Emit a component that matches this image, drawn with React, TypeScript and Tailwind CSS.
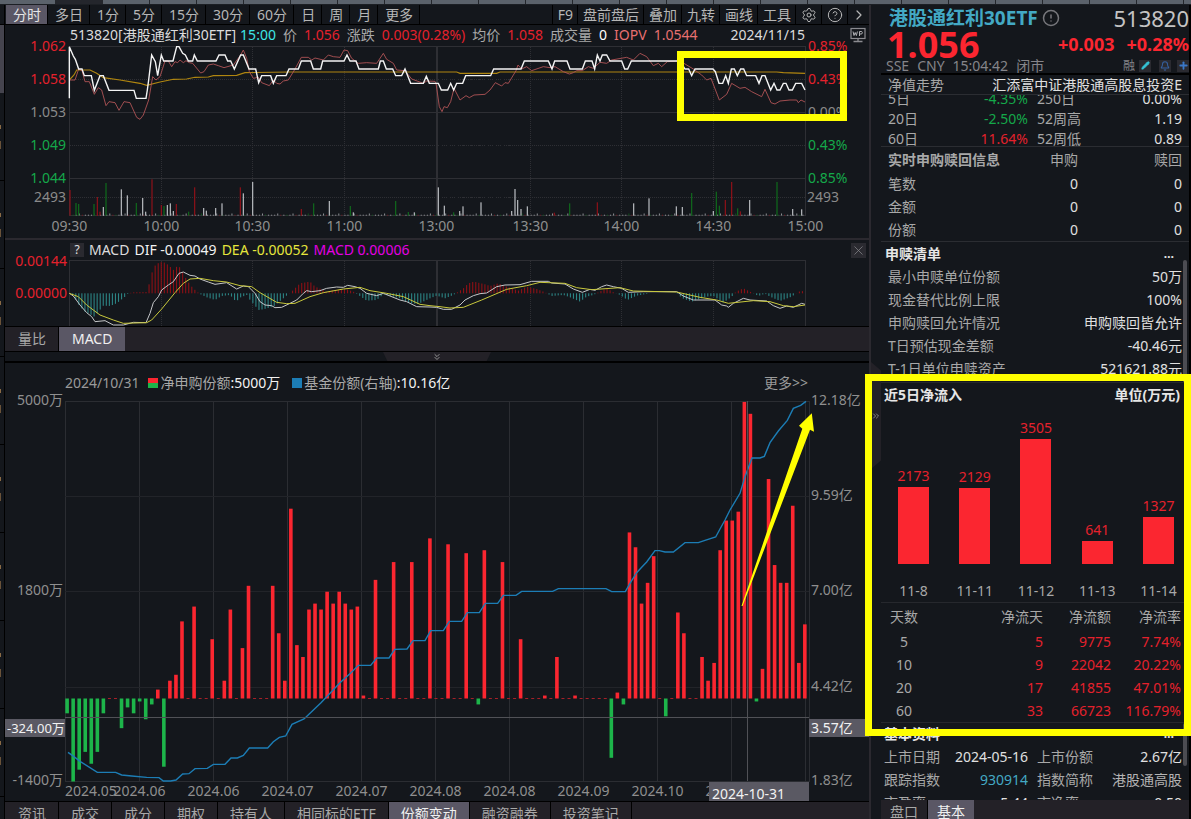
import React from "react";
import { Bell, ChevronRight, ChevronsDown, ChevronsRight, CircleAlert, CircleHelp, Pencil, Plus, Settings, X } from "lucide-react";

type Pt = [number, number];

/* Series are stored at three units per pixel. */
const line = (data: number[], dy = 0) => {
  const out: string[] = [];
  for (let i = 0; i < data.length; i += 2) out.push(`${data[i] / 3},${data[i + 1] / 3 + dy}`);
  return out.join(" ");
};
const shift = (data: number[], dx: number) => data.map((v, i) => (i % 2 ? v : v + dx));

const price = [
  208, 295, 208, 140, 220, 168, 226, 178, 236, 207, 246, 207, 253, 227, 274, 227, 283, 271, 300, 227, 310, 227, 327, 271, 402, 271, 409, 295,
  438, 295, 442, 270, 446, 240, 455, 165, 466, 185, 473, 227, 484, 165, 491, 183, 519, 183, 530, 140, 537, 140, 548, 160, 556, 165, 565, 183,
  578, 183, 583, 165, 592, 183, 648, 183, 657, 165, 675, 165, 683, 183, 692, 183, 703, 207, 722, 165, 730, 165, 747, 207, 767, 207, 776, 248,
  785, 227, 812, 227, 820, 250, 830, 227, 858, 227, 867, 207, 895, 207, 904, 183, 932, 183, 940, 207, 962, 207, 968, 183, 1032, 183, 1041, 165,
  1050, 183, 1068, 183, 1077, 207, 1135, 207, 1141, 183, 1150, 183, 1159, 207, 1178, 207, 1187, 227, 1205, 227, 1215, 207, 1232, 250,
  1270, 250, 1279, 229, 1288, 250,
  ...shift([
    25, 250, 34, 270, 53, 270, 62, 250, 71, 270, 80, 250, 98, 250, 107, 227, 182, 227, 191, 207, 273, 207, 283, 183, 355, 183, 366, 207,
    374, 183, 411, 183, 420, 207, 457, 207, 466, 183, 486, 183, 494, 207, 502, 165, 510, 183, 517, 165, 530, 165, 540, 183, 575, 183,
    584, 207, 593, 207, 604, 183, 750, 183, 765, 207, 776, 207, 785, 227, 795, 207, 849, 207, 856, 215, 867, 250, 878, 250, 887, 227,
    895, 250, 904, 207, 913, 207, 922, 227, 932, 207, 941, 207, 950, 227, 977, 227, 987, 250, 996, 227, 1005, 227, 1022, 270, 1032, 250,
    1041, 270, 1050, 270, 1060, 250, 1068, 250, 1077, 270, 1087, 270, 1097, 250, 1115, 250, 1125, 270,
  ], 1290),
];

const iopv = [
  208, 240, 225, 240, 236, 207, 246, 212, 255, 245, 268, 245, 283, 283, 295, 263, 305, 270, 318, 317, 327, 305, 345, 308, 357, 331, 372, 305,
  390, 308, 410, 352, 420, 358, 430, 345, 446, 300, 458, 230, 468, 240, 480, 230, 495, 183, 505, 183, 515, 200, 525, 185, 533, 188, 540, 180,
  550, 188, 558, 182, 568, 188, 578, 190, 602, 219, 612, 215, 625, 195, 640, 192, 655, 197, 672, 203, 700, 195, 722, 165, 730, 150, 740, 175,
  748, 215, 760, 235, 775, 232, 785, 248, 808, 257, 820, 240, 830, 250, 840, 252, 850, 243, 865, 240, 885, 207, 904, 172, 925, 172, 935, 180,
  945, 174, 970, 180, 985, 165, 1000, 170, 1020, 172, 1032, 150, 1043, 152, 1055, 175, 1075, 190, 1100, 188, 1130, 190, 1150, 160, 1160, 178,
  1180, 190, 1190, 210, 1215, 212, 1235, 237, 1270, 250, 1280, 243, 1305, 244,
  ...shift([
    18, 250, 28, 320, 36, 335, 42, 320, 52, 323, 62, 305, 72, 265, 90, 300, 108, 287, 118, 293, 132, 285, 165, 283, 180, 270, 196, 248,
    215, 258, 225, 248, 235, 250, 258, 212, 264, 195, 275, 207, 290, 200, 305, 212, 340, 200, 360, 203, 375, 200, 400, 215, 418, 222,
    430, 218, 440, 212, 457, 212, 475, 200, 490, 205, 510, 187, 530, 190, 545, 180, 590, 172, 610, 180, 630, 160, 650, 170, 670, 197,
    685, 190, 695, 200, 712, 185, 750, 183, 790, 207, 815, 225, 830, 240, 843, 235, 868, 300, 890, 283, 905, 250, 930, 265, 945, 262,
    965, 275, 995, 290, 1005, 268, 1023, 308, 1035, 312, 1050, 303, 1080, 300, 1100, 300, 1105, 308, 1113, 300, 1125, 306,
  ], 1290),
];

const average = [
  208, 240, 222, 225, 230, 210, 270, 210, 290, 220, 310, 233, 360, 240, 420, 250, 440, 256, 480, 246, 520, 238, 560, 237, 585, 232, 625, 231,
  640, 227, 710, 226, 735, 218, 870, 216, 1370, 216, 1380, 220, 1490, 220, 1500, 216, 2330, 216, 2350, 218, 2415, 220,
];

type Tone = "r" | "g" | "w";
const toneFill: Record<Tone, string> = { r: "#8f1219", g: "#0f6a1c", w: "#b9bcc0" };
const volume: [number, number, Tone][] = [
  [210, 210, "r"], [228, 249, "g"], [236, 252, "g"], [282, 252, "g"], [292, 231, "r"], [300, 275, "r"], [310, 261, "w"], [318, 189, "g"],
  [364, 208, "w"], [382, 226, "w"], [409, 249, "g"], [428, 234, "w"], [437, 275, "w"], [456, 178, "r"], [484, 255, "r"], [492, 258, "g"],
  [502, 255, "w"], [511, 250, "w"], [520, 273, "w"], [529, 252, "r"], [566, 275, "g"], [584, 202, "r"], [611, 264, "w"], [619, 272, "w"],
  [647, 264, "w"], [666, 250, "w"], [721, 202, "r"], [730, 220, "w"], [758, 186, "w"], [904, 267, "r"], [941, 250, "g"], [988, 243, "w"],
  [1051, 258, "g"], [1060, 277, "w"], [1187, 243, "g"], [1225, 276, "g"], [1243, 277, "w"], [1315, 202, "w"], [1333, 257, "w"],
  [1361, 277, "g"], [1379, 273, "w"], [1389, 259, "w"], [1443, 247, "w"], [1535, 273, "w"], [1545, 207, "w"], [1553, 240, "w"],
  [1563, 267, "w"], [1582, 259, "w"], [1663, 278, "r"], [1709, 250, "g"], [1792, 247, "r"], [1901, 250, "w"], [1947, 235, "w"],
  [2029, 259, "w"], [2047, 261, "w"], [2075, 219, "g"], [2140, 273, "w"], [2149, 215, "g"], [2158, 257, "g"], [2176, 240, "r"],
  [2195, 186, "r"], [2213, 265, "g"], [2221, 274, "r"], [2249, 240, "w"], [2331, 186, "g"], [2378, 267, "w"], [2405, 268, "w"],
];

const histogram: Pt[] = ([
  [210, 520], [218, 525], [240, 560], [255, 575], [283, 590], [310, 557], [330, 558], [350, 550], [375, 530], [385, 520], [400, 517], [440, 516],
  [446, 497], [458, 450], [468, 432], [488, 425], [505, 435], [520, 450], [530, 440], [540, 442], [550, 460], [560, 480], [575, 500],
  [590, 515], [600, 522], [620, 532], [645, 540], [665, 528], [690, 525], [708, 545], [722, 532], [740, 525], [750, 540], [776, 570],
  [790, 568], [820, 560], [850, 535], [870, 518], [880, 510], [900, 490], [930, 485], [945, 500], [965, 508], [980, 516], [1000, 510],
  [1040, 508], [1060, 515], [1075, 525], [1100, 542], [1130, 540], [1150, 523], [1170, 528], [1200, 535], [1230, 550], [1255, 552],
  [1290, 535], [1310, 527], [1335, 535], [1360, 525], [1375, 515], [1390, 505], [1405, 490], [1422, 485], [1455, 493], [1470, 498],
  [1495, 490], [1520, 500], [1555, 512], [1580, 500], [1610, 507], [1635, 517], [1655, 528], [1690, 525], [1710, 532], [1740, 545],
  [1760, 530], [1780, 525], [1795, 517], [1820, 505], [1840, 517], [1860, 525], [1882, 540], [1910, 527], [1940, 522], [1950, 520],
  [2030, 520], [2047, 535], [2075, 545], [2120, 530], [2140, 528], [2170, 548], [2195, 530], [2208, 515], [2230, 505], [2250, 515],
  [2275, 528], [2295, 521], [2310, 530], [2340, 543], [2375, 530], [2395, 515], [2412, 513],
] as Pt[]);

const sample = (env: Pt[], x: number) => {
  for (let i = 1; i < env.length; i++) {
    if (x <= env[i][0]) {
      const [x0, y0] = env[i - 1];
      const [x1, y1] = env[i];
      return y0 + ((y1 - y0) * (x - x0)) / (x1 - x0);
    }
  }
  return env[env.length - 1][1];
};
const minutes = Array.from({ length: 240 }, (_, i) => 218 + i * 9.16);

const dif = [
  208, 520, 220, 528, 240, 555, 260, 578, 275, 590, 285, 605, 315, 602, 340, 615, 370, 615, 400, 607, 438, 608, 450, 580, 460, 548, 475, 530,
  485, 510, 505, 495, 520, 485, 537, 460, 550, 456, 570, 466, 585, 468, 600, 477, 625, 486, 645, 493, 680, 488, 710, 507, 730, 498, 745, 500,
  765, 520, 780, 545, 795, 555, 815, 557, 825, 563, 845, 562, 870, 550, 890, 540, 910, 520, 920, 512, 935, 515, 960, 512, 980, 505, 1010, 501,
  1030, 502, 1043, 496, 1065, 500, 1080, 505, 1100, 520, 1130, 527, 1150, 520, 1170, 528, 1200, 540, 1220, 545, 1250, 560, 1290, 561,
  ...shift([
    20, 562, 40, 568, 65, 568, 90, 555, 105, 540, 130, 527, 150, 521, 170, 519, 200, 500, 225, 495, 270, 494, 305, 484, 355, 484, 365, 489,
    405, 492, 430, 507, 457, 517, 480, 508, 495, 511, 515, 500, 530, 495, 550, 500, 575, 505, 595, 517, 640, 515, 740, 515, 760, 528,
    790, 540, 855, 540, 875, 555, 890, 558, 895, 562, 910, 550, 940, 535, 960, 540, 1010, 543, 1030, 557, 1050, 565, 1070, 558, 1090, 562,
    1115, 550, 1125, 553,
  ], 1290),
];
const dea = [
  208, 520, 235, 530, 260, 555, 300, 585, 340, 600, 370, 610, 440, 608, 455, 600, 485, 567, 525, 518, 550, 490, 570, 477, 600, 475, 640, 482,
  680, 486, 720, 497, 755, 500, 780, 518, 830, 547, 860, 551, 885, 550, 930, 530, 970, 518, 1030, 507, 1080, 502, 1110, 512, 1160, 520,
  1210, 530, 1260, 553, 1290, 557,
  ...shift([
    30, 560, 60, 564, 100, 562, 155, 540, 230, 508, 290, 497, 330, 487, 405, 490, 440, 503, 485, 509, 570, 503, 610, 513, 740, 516,
    810, 532, 860, 540, 895, 550, 970, 542, 1020, 545, 1060, 557, 1090, 560, 1125, 555,
  ], 1290),
];

/* Daily net subscriptions in units of 10,000 shares; days not listed are zero. */
const subscriptions: Record<number, number> = {
  0: -250, 1: -1400, 2: -1200, 3: -900, 4: -1100, 5: -900, 6: -250, 9: -500, 10: -150, 11: -250, 12: -50, 13: -350, 14: -100, 15: 150,
  16: -1150, 17: 300, 18: 400, 19: 1300, 21: 1550, 24: 1000, 26: 300, 27: 1500, 29: 850, 30: 1900, 34: 1900, 35: 1100, 36: 300, 37: 3200,
  38: 900, 39: 700, 40: 1500, 41: 1600, 42: 1500, 43: 1800, 44: 1600, 45: 1800, 46: 1600, 47: 1500, 48: 1550, 49: 50, 51: 2000, 54: 2300,
  57: 2300, 60: 2700, 63: 2600, 66: 2450, 68: -100, 69: 2500, 72: 2300, 75: 1000, 79: 50, 81: 700, 84: 50, 90: -1000, 91: 100, 92: -100,
  93: 2800, 94: 2550, 95: 1600, 96: 1950, 97: 2400, 99: -300, 101: 1450, 102: 1100, 105: 700, 106: 300, 107: 600, 108: 2500, 109: 3000,
  110: 3000, 111: 3150, 112: 5000, 113: 4800, 114: -50, 115: 500, 116: 3700, 117: 2250, 118: 1950, 119: 1950, 120: 3250, 121: 600, 122: 1250,
};
const shares = [
  204, 487, 222, 500, 240, 514, 292, 547, 347, 547, 365, 555, 395, 558, 440, 562, 477, 563, 490, 573, 512, 573, 528, 570, 548, 552, 567, 551,
  585, 536, 622, 535, 640, 523, 675, 523, 693, 504, 712, 504, 730, 496, 748, 474, 803, 474, 820, 455, 838, 442, 857, 438, 876, 403, 912, 387,
  930, 370, 963, 338, 1020, 278, 1053, 248, 1075, 226, 1112, 226, 1130, 204, 1167, 204, 1184, 178, 1221, 177, 1239, 152, 1275, 152, 1292, 122,
  ...shift([
    40, 122, 58, 94, 95, 94, 112, 68, 148, 68, 166, 40, 203, 40, 220, 16, 258, 16, 275, 4, 368, 4, 385, -4, 528, -4, 545, 5, 586, 5,
    600, -20, 620, -52, 635, -68, 650, -84, 675, -118, 688, -118, 705, -114, 730, -114, 765, -142, 805, -142, 825, -149, 857, -159,
    870, -183, 885, -210, 900, -240, 930, -290, 945, -340, 966, -396, 990, -396, 1003, -401, 1020, -442, 1045, -477, 1072, -509,
    1090, -545, 1112, -554, 1128, -566,
  ], 1290),
];

const chartFont = "text-[14px]";
const hours = ["09:30", "10:00", "10:30", "11:00", "13:00", "13:30", "14:00", "14:30", "15:00"];
const hourX = [69.5, 161.5, 252.5, 344.5, 436.5, 530.5, 621.5, 713.5, 805.5];

function PriceChart() {
  const left: [string, number, string][] = [
    ["1.062", 46, "#e4212c"], ["1.058", 79, "#e4212c"], ["1.053", 112, "#8a8a8a"], ["1.049", 145, "#14a84a"], ["1.044", 178, "#14a84a"], ["2493", 197, "#8a8a8a"],
  ];
  const right: [string, number, string][] = [
    ["0.85%", 46, "#e4212c"], ["0.43%", 79, "#e4212c"], ["0.00%", 112, "#8a8a8a"], ["0.43%", 145, "#14a84a"], ["0.85%", 178, "#14a84a"], ["2493", 197, "#8a8a8a"],
  ];
  return (
    <svg viewBox="5 45 864 192" className={`block h-auto w-full overflow-visible ${chartFont}`} role="img" aria-label="分时走势">
      <g stroke="#2e2f34" strokeWidth="1" shapeRendering="crispEdges">
        <path d="M69.5 46.5H805.5V215.5H69.5ZM69.5 112.5H805.5M69.5 178.5H805.5" fill="none" />
        <path d="M69.5 79.5H805.5M69.5 145.5H805.5M69.5 197.5H805.5" strokeDasharray="1 1" />
        {hourX.slice(1, 8).map((x) => (
          <path key={x} d={`M${x} 46.5V215.5`} strokeDasharray={x === 436.5 ? undefined : "1 1"} strokeWidth={x === 436.5 ? 2 : 1} />
        ))}
      </g>
      {minutes.map((x, i) => (
        <rect key={x} x={x / 3} y={i % 5 === 2 ? 213.5 : 214.7} width="1" height={i % 5 === 2 ? 2 : 1} fill={toneFill[i % 7 === 0 ? "g" : i % 5 === 3 ? "r" : "w"]} opacity="0.75" />
      ))}
      {volume.map(([x, top, tone]) => (
        <rect key={x} x={x / 3 - 0.6} y={120 + top / 3} width="1.2" height={(287 - top) / 3} fill={toneFill[tone]} />
      ))}
      <polyline points={line(average)} fill="none" stroke="#b08610" strokeWidth="1.1" />
      <polyline points={line(iopv)} fill="none" stroke="#b05456" strokeWidth="0.9" />
      <polyline points={line(price)} fill="none" stroke="#f4f4f4" strokeWidth="1.4" />
      {left.map(([t, y, c]) => (
        <text key={y} x="66" y={y + 5} textAnchor="end" fill={c}>{t}</text>
      ))}
      {right.map(([t, y, c]) => (
        <text key={y} x={t === "2493" ? 807 : 808} y={y + 5} fill={c}>{t}</text>
      ))}
      {hours.map((t, i) => (
        <text key={t} x={hourX[i]} y="231" textAnchor="middle" fill="#8f8f8f">{t}</text>
      ))}
      <rect x="680.5" y="54.5" width="163" height="63" fill="none" stroke="#ffff00" strokeWidth="7" />
    </svg>
  );
}

function MacdChart() {
  return (
    <svg viewBox="5 260 864 66" className={`block h-auto w-full overflow-visible ${chartFont}`} role="img" aria-label="MACD">
      <g stroke="#2e2f34" strokeWidth="1" fill="none" shapeRendering="crispEdges">
        <path d="M69.5 326V260.5H805.5V326" />
        {hourX.slice(1, 8).map((x) => (
          <path key={x} d={`M${x} 260.5V326`} strokeDasharray={x === 436.5 ? undefined : "1 1"} strokeWidth={x === 436.5 ? 2 : 1} />
        ))}
      </g>
      {minutes.map((x) => {
        const d = (sample(histogram, x) - 520) / 3;
        return <rect key={x} x={x / 3 - 0.5} y={293.3 + Math.min(0, d)} width="1.1" height={Math.abs(d)} fill={d < 0 ? "#8c1015" : "#2c8484"} />;
      })}
      <polyline points={line(dif, 120)} fill="none" stroke="#c4c6c8" strokeWidth="1" />
      <polyline points={line(dea, 120)} fill="none" stroke="#c8c83c" strokeWidth="1" />
      <text x="67" y="266" textAnchor="end" fill="#e4212c">0.00144</text>
      <text x="67" y="298" textAnchor="end" fill="#e4212c">0.00000</text>
    </svg>
  );
}

function ShareChart() {
  const gridX = [139.5, 213.5, 287.5, 361.5, 435.5, 509.5, 583.5, 657.5, 731.5];
  const months = ["2024.06", "2024.06", "2024.07", "2024.07", "2024.08", "2024.08", "2024.09", "2024.10", "2024.10"];
  const left: [string, number][] = [["5000万", 400], ["1800万", 590], ["-1400万", 780]];
  const right: [string, number][] = [["12.18亿", 400], ["9.59亿", 495], ["7.00亿", 590], ["4.42亿", 686], ["1.83亿", 780]];
  return (
    <svg viewBox="5 393 864 408" className={`block h-auto w-full overflow-visible ${chartFont}`} role="img" aria-label="份额变动">
      <g stroke="#2b2d32" strokeWidth="1" fill="none" shapeRendering="crispEdges">
        <path d="M65.5 401.5H809.5V781.5H65.5ZM805.5 401V781" />
        {gridX.map((x) => <path key={x} d={`M${x} 401V781`} />)}
        <path d="M65 496.5H809M65 591.5H809M65 687.5H809" stroke="#222429" />
      </g>
      {Array.from({ length: 123 }, (_, i) => {
        const v = subscriptions[i] ?? 0;
        const x = 67.1 + i * 6.047;
        const h = Math.abs(v) / 16.86;
        if (!v) return <rect key={i} x={x - 1.5} y="698" width="3" height="1" fill="#a52028" />;
        return <rect key={i} x={x - 1.8} y={v > 0 ? 698.5 - h : 698.5} width="3.6" height={h} fill={v > 0 ? "#fb2630" : "#1db54a"} />;
      })}
      <polyline points={line(shares, 590)} fill="none" stroke="#1c7db5" strokeWidth="1.4" />
      <g stroke="#505156" strokeWidth="1" shapeRendering="crispEdges">
        <path d="M65 717.5H809" />
        <path d="M747.5 401V781" />
      </g>
      {left.map(([t, y]) => <text key={t} x="63" y={y + 5} textAnchor="end" fill="#8f8f8f">{t}</text>)}
      {right.map(([t, y]) => <text key={t} x="811" y={y + 5} fill="#8f8f8f">{t}</text>)}
      <text x="65" y="796" fill="#8f8f8f">2024.05</text>
      {months.map((t, i) => <text key={i} x={gridX[i]} y="796" textAnchor="middle" fill="#8f8f8f">{t}</text>)}
      <rect x="5" y="719" width="60" height="18" fill="#5a5963" />
      <text x="7" y="733" fill="#f2f2f2" className="text-[13px]">-324.00万</text>
      <rect x="809" y="719" width="60" height="18" fill="#5a5963" />
      <text x="811" y="733" fill="#f2f2f2">3.57亿</text>
      <rect x="709" y="782" width="100" height="19" fill="#5a5963" />
      <text x="712" y="799" fill="#f2f2f2">2024-10-31</text>
      <path d="M741.5 606 802.3 428.7 799 425.7 811.8 413.3 814 431.7 810 429.7 742.6 606Z" fill="#ffff00" />
    </svg>
  );
}

function TopStrip() {
  return (
    <div className="flex h-[5px] shrink-0 overflow-hidden border-b border-[#1c1f24] bg-[#5b626b]">
      <div className="w-[55px] shrink-0" />
      {Array.from({ length: 40 }, (_, i) => (
        <div key={i} className={`w-[47px] shrink-0 border-l border-[#24272c] ${i === 0 ? "bg-[#24262c]" : ""}`} />
      ))}
    </div>
  );
}

const periods = ["分时", "多日", "1分", "5分", "15分", "30分", "60分", "日", "周", "月", "更多"];
const tools = ["F9", "盘前盘后", "叠加", "九转", "画线", "工具"];
const toolClass = "flex items-center border-l border-black pr-1 pl-[5px]";

function Toolbar() {
  return (
    <div className="flex h-5 shrink-0 border-b border-black pl-px leading-5 text-[#b6b6b6]">
      {periods.map((p, i) => (
        <button key={p} type="button" className={`border-r border-black pr-[6px] pl-[7px] ${i === 0 ? "bg-[#5a5765] text-[#e6e6e6]" : ""}`}>{p}</button>
      ))}
      <div className="ml-auto flex">
        {tools.map((t) => <button key={t} type="button" className={toolClass}>{t}</button>)}
        <button type="button" aria-label="设置" className={toolClass}><Settings size={16} strokeWidth={1.5} /></button>
        <button type="button" aria-label="帮助" className={toolClass}><CircleHelp size={16} strokeWidth={1.5} /></button>
        <button type="button" aria-label="展开" className="flex w-[22px] items-center justify-center border-l border-black"><ChevronRight size={16} strokeWidth={1.8} /></button>
      </div>
    </div>
  );
}

function QuoteLine() {
  return (
    <div className="flex h-5 shrink-0 items-center gap-[7px] pr-[3px] pl-[65px] leading-5 whitespace-nowrap">
      <span className="text-[#dcdcdc]">513820[港股通红利30ETF]</span>
      <span className="-ml-[3px] text-[#3fe6e6]">15:00</span>
      <span>价</span><span className="text-[#e4212c]">1.056</span>
      <span>涨跌</span><span className="text-[#e4212c]">0.003(0.28%)</span>
      <span>均价</span><span className="text-[#e4212c]">1.058</span>
      <span>成交量</span><span className="text-white">0</span>
      <span className="text-[#e87070]">IOPV</span><span className="text-[#e87070]">1.0544</span>
      <span className="ml-auto text-[#dcdcdc]">2024/11/15</span>
      <svg className="ml-[38px] shrink-0" width="16" height="16" viewBox="0 0 16 16" aria-hidden="true">
        <rect x="1" y="1.5" width="14" height="10" fill="none" stroke="#8b8b90" strokeWidth="1.2" />
        <path d="M8 12v2M3.500 14.500h9" stroke="#8b8b90" strokeWidth="1.3" />
        <path d="M3 4.500l1 4 1.200-3 1.200 3 1-4M9.500 9V4.500h2.200q1.300 1.200 0 2.500H9.500" fill="none" stroke="#b0b0b4" strokeWidth="1" />
      </svg>
    </div>
  );
}

const bottomTabs = ["资讯", "成交", "成分", "期权", "持有人", "相同标的ETF", "份额变动", "融资融券", "投资笔记"];

function MainPanel() {
  return (
    <main className="flex min-w-0 flex-1 flex-col">
      <Toolbar />
      <QuoteLine />
      <div className="shrink-0"><PriceChart /></div>
      <div className="h-[3px] shrink-0 border-b-2 border-[#2b292f]" />
      <div className="flex h-5 shrink-0 items-center gap-[5px] pr-[3px] pl-[65px] leading-5">
        <button type="button" className="h-[14px] w-[14px] bg-[#2a2a30] text-[12px] leading-[14px] text-[#e0e0e0]">?</button>
        <span className="text-[#dcdcdc]">MACD</span>
        <span className="text-[#f2f2f2]">DIF -0.00049</span>
        <span className="text-[#e6e63c]">DEA -0.00052</span>
        <span className="text-[#e400e4]">MACD 0.00006</span>
        <button type="button" aria-label="关闭" className="ml-auto flex h-[15px] w-[15px] items-center justify-center bg-[#2a2a30] text-[#85858a]"><X size={15} strokeWidth={1.2} /></button>
      </div>
      <div className="shrink-0"><MacdChart /></div>
      <div className="flex h-[26px] shrink-0 border-y border-black bg-[#232127] pl-px leading-6">
        <button type="button" className="border-r border-black px-3">量比</button>
        <button type="button" className="bg-[#5a5765] px-[13px] text-[#f0f0f0]">MACD</button>
      </div>
      <div className="flex h-[11px] shrink-0 justify-center border-b-2 border-black">
        <button type="button" aria-label="收起" className="flex w-[108px] items-center justify-center bg-[#232127] [clip-path:polygon(0_0,100%_0,96%_100%,4%_100%)]"><ChevronsDown size={10} strokeWidth={2} /></button>
      </div>
      <div className="flex h-[30px] shrink-0 items-end pr-[61px] pl-[60px] leading-5 whitespace-nowrap">
        <span className="text-[#9a9a9a]">2024/10/31</span>
        <span className="mb-[5px] ml-[9px] flex h-[10px] w-[10px] flex-col bg-[#1db54a]"><span className="h-[5px] bg-[#fb2630]" /></span>
        <span className="ml-0.5">净申购份额<span className="text-[#f2f2f2]">:5000万</span></span>
        <span className="mb-[5px] ml-3 h-[10px] w-[10px] bg-[#1c7db5]" />
        <span className="ml-0.5">基金份额(右轴)<span className="text-[#f2f2f2]">:10.16亿</span></span>
        <a href="#more" className="ml-auto text-[#9a9a9a]">更多&gt;&gt;</a>
      </div>
      <div className="shrink-0"><ShareChart /></div>
      <div className="flex h-6 shrink-0 border-t border-black bg-[#232127] pl-px leading-6 whitespace-nowrap">
        {bottomTabs.map((t) => (
          <button key={t} type="button" className={`border-r border-black px-3 ${t === "份额变动" ? "bg-[#5a5765] text-[#f0f0f0]" : ""}`}>{t}</button>
        ))}
      </div>
    </main>
  );
}

function PairRow({ a, av, b, bv, tone, bTone = "text-[#e0e0e0]" }: { a: string; av: string; b: string; bv: string; tone: string; bTone?: string }) {
  return (
    <div className="flex">
      <span>{a}</span>
      <span className={`ml-auto ${tone}`}>{av}</span>
      <span className="ml-[9px] flex w-[145px] shrink-0 justify-between"><span>{b}</span><span className={bTone}>{bv}</span></span>
    </div>
  );
}

const listing = [
  ["最小申赎单位份额", "50万"], ["现金替代比例上限", "100%"], ["申购赎回允许情况", "申购赎回皆允许"], ["T日预估现金差额", "-40.46元"], ["T-1日单位申赎资产", "521621.88元"],
];
const inflow = [
  { day: "11-8", value: 2173 }, { day: "11-11", value: 2129 }, { day: "11-12", value: 3505 }, { day: "11-13", value: 641 }, { day: "11-14", value: 1327 },
];
const flows = [["5", "5", "9775", "7.74%"], ["10", "9", "22042", "20.22%"], ["20", "17", "41855", "47.01%"], ["60", "33", "66723", "116.79%"]];

function NetInflow() {
  return (
    <section className="relative z-10 shrink-0 border-y border-[#26282d]">
      <h2 className="flex h-[23px] justify-between pr-[9px] pl-[3px] leading-[23px] font-bold text-[#e6e6e6]"><span>近5日净流入</span><span>单位(万元)</span></h2>
      <div className="grid h-[158px] grid-cols-5 items-end pl-0.5">
        {inflow.map((d) => (
          <div key={d.day} className="flex flex-col items-center">
            <span className="leading-[22px] text-[#e4212c]">{d.value}</span>
            <div className="w-[31px] bg-[#fb2630]" style={{ height: Math.round(d.value / 28.1) }} />
          </div>
        ))}
      </div>
      <div className="grid h-[39px] grid-cols-5 border-b border-[#26282d] pt-[17px] pl-0.5 text-center leading-5">
        {inflow.map((d) => <span key={d.day}>{d.day}</span>)}
      </div>
      <table className="w-full table-fixed text-right">
        <thead>
          <tr className="h-[27px]">
            <th className="w-[38px] pl-2 text-center font-normal whitespace-nowrap">天数</th>
            <th className="font-normal">净流天</th>
            <th className="w-[68px] font-normal">净流额</th>
            <th className="w-[78px] pr-2 font-normal">净流率</th>
          </tr>
        </thead>
        <tbody className="text-[#e4212c]">
          {flows.map((r) => (
            <tr key={r[0]} className="h-[23px] leading-[23px]">
              <td className="pl-2 text-center text-[#a8a8a8]">{r[0]}</td>
              <td>{r[1]}</td><td>{r[2]}</td><td className="pr-2">{r[3]}</td>
            </tr>
          ))}
        </tbody>
      </table>
      <div className="pointer-events-none absolute -top-[9px] -right-[2px] -bottom-[14px] -left-[16px] border-[7px] border-[#ffff00]" />
    </section>
  );
}

function QuotePanel() {
  return (
    <aside className="flex w-[322px] shrink-0">
      <div className="relative flex w-3 shrink-0 flex-col border-l-2 border-[#2b292f]">
        <button type="button" aria-label="收起侧栏" className="mt-[357px] flex h-[107px] items-center justify-center bg-[#232127] [clip-path:polygon(0_0,100%_8%,100%_92%,0_100%)]"><ChevronsRight size={10} strokeWidth={1.8} /></button>
      </div>
      <div className="flex min-w-0 flex-1 flex-col border-r-2 border-black">
        <header className="shrink-0 border-b-2 border-black">
          <div className="flex h-[26px] items-center pl-2">
            <h1 className="text-[19px] leading-[26px] font-bold text-[#43a9c4]">港股通红利30ETF</h1>
            <CircleAlert size={18} strokeWidth={2} className="ml-1 text-[#77777c]" />
            <span className="ml-auto text-[22px] leading-[26px] text-[#c4c4c4]">513820</span>
          </div>
          <div className="flex h-[27px] items-center pl-[6px] font-bold text-[#fb2630]">
            <span className="text-[36px] leading-[27px]">1.056</span>
            <span className="ml-auto text-[18px] leading-[27px]">+0.003</span>
            <span className="ml-3 text-[18px] leading-[27px]">+0.28%</span>
          </div>
          <div className="flex h-[15px] items-center gap-2 pl-[5px] leading-[15px] text-[#85858a]">
            <span>SSE</span><span>CNY</span><span>15:04:42</span><span>闭市</span>
            <span className="ml-auto text-[12px]">融</span>
            <button type="button" aria-label="编辑" className="-ml-1 flex h-3 w-3 items-center justify-center bg-[#2a2a30]"><Pencil size={9} fill="#35c3d6" className="text-[#35c3d6]" /></button>
            <button type="button" aria-label="提醒" className="flex h-3 w-3 items-center justify-center bg-[#2a2a30]"><Bell size={10} strokeWidth={2.5} className="text-[#3560a0]" /></button>
            <button type="button" aria-label="添加" className="-ml-0.5 flex h-3 w-3 items-center justify-center bg-[#2a2a30]"><Plus size={11} strokeWidth={4} className="text-[#3b78c8]" /></button>
          </div>
        </header>
        <div className="flex h-5 shrink-0 justify-between border-b border-[#2b2d32] pr-[7px] pl-[7px] leading-[19px]">
          <span>净值走势</span><span className="text-[#e0e0e0]">汇添富中证港股通高股息投资E</span>
        </div>
        <div className="h-[52px] shrink-0 overflow-hidden border-b border-[#2b2d32] pr-[7px] pl-[7px] leading-5">
          <div className="-mt-[6px]">
            <PairRow a="5日" av="-4.35%" tone="text-[#14a84a]" b="250日" bv="0.00%" />
            <PairRow a="20日" av="-2.50%" tone="text-[#14a84a]" b="52周高" bv="1.19" />
            <PairRow a="60日" av="11.64%" tone="text-[#e4212c]" b="52周低" bv="0.89" />
          </div>
        </div>
        <table className="w-full shrink-0 text-right leading-[23px]">
          <thead>
            <tr className="h-[25px]">
              <th className="pl-[7px] text-left font-bold">实时申购赎回信息</th>
              <th className="w-[75px] font-normal">申购</th>
              <th className="w-[111px] pr-[7px] font-normal">赎回</th>
            </tr>
          </thead>
          <tbody>
            {["笔数", "金额", "份额"].map((t) => (
              <tr key={t} className="text-[#e0e0e0]"><td className="pl-[7px] text-left text-[#a8a8a8]">{t}</td><td>0</td><td className="pr-[7px]">0</td></tr>
            ))}
          </tbody>
        </table>
        <section className="relative h-[141px] shrink-0 overflow-hidden border-t border-[#2b2d32]">
          <h2 className="flex h-[23px] justify-between pr-[15px] pl-1 leading-6 font-bold text-[#e6e6e6]"><span>申赎清单</span><button type="button" aria-label="更多申赎清单" className="text-[12px]">…</button></h2>
          <dl className="pr-[7px] pl-[7px] leading-[23px]">
            {listing.map(([k, v]) => (
              <div key={k} className="flex justify-between"><dt>{k}</dt><dd className="text-[#e0e0e0]">{v}</dd></div>
            ))}
          </dl>
          <div className="absolute top-[18px] right-0.5 h-32 w-1 rounded-full bg-[#4c4c52]" />
        </section>
        <NetInflow />
        <section className="relative min-h-0 flex-1 overflow-hidden">
          <h2 className="flex h-[22px] justify-between pr-[15px] pl-[3px] leading-[22px] font-bold text-[#e6e6e6]"><span>基本资料</span><button type="button" aria-label="更多基本资料" className="text-[12px]">…</button></h2>
          <div className="pr-[7px] pl-[3px] leading-[23px]">
            <PairRow a="上市日期" av="2024-05-16" tone="text-[#e0e0e0]" b="上市份额" bv="2.67亿" />
            <PairRow a="跟踪指数" av="930914" tone="text-[#43a9c4]" b="指数简称" bv="港股通高股" bTone="text-[#b4b4b4]" />
            <PairRow a="市盈率" av="5.44" tone="text-[#e0e0e0]" b="市净率" bv="0.50" />
          </div>
          <div className="absolute top-0 right-0.5 h-[43px] w-1 rounded-full bg-[#4c4c52]" />
        </section>
        <div className="flex h-[19px] shrink-0 overflow-hidden bg-[#232127] leading-6">
          <button type="button" className="h-6 border-r border-black px-[9px]">盘口</button>
          <button type="button" className="h-6 bg-[#5a5765] px-[9px] text-[#f0f0f0]">基本</button>
        </div>
      </div>
    </aside>
  );
}

function EdgeRail() {
  return (
    <div className="flex w-[5px] shrink-0 flex-col border-r border-black">
      <div className="h-5 border-b border-black" />
      <div className="h-[68px] bg-[#45444e]" />
      {[0, 1, 2, 3, 4, 5, 6, 7].map((i) => (
        <div key={i} className="flex h-[88px] shrink-0 flex-col gap-3 border-b border-black pt-8">
          <div className="h-1 w-px bg-[#8a6a44]" />
          <div className="h-2 w-px bg-[#6a5238]" />
        </div>
      ))}
    </div>
  );
}

export default function App() {
  return (
    <div className="flex h-screen flex-col overflow-hidden bg-[#14171c] font-['Noto_Sans','Noto_Sans_CJK_SC',sans-serif] text-[14px] text-[#a8a8a8]">
      <TopStrip />
      <div className="flex min-h-0 flex-1 overflow-hidden">
        <EdgeRail />
        <MainPanel />
        <QuotePanel />
      </div>
    </div>
  );
}
